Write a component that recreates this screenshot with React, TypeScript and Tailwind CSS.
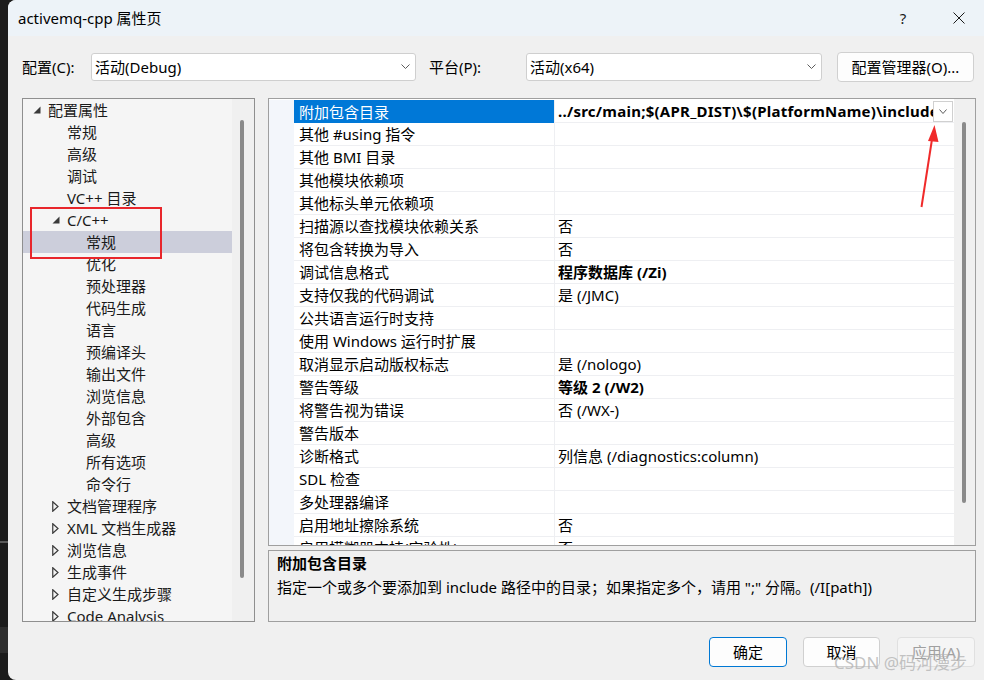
import React from "react";

type TreeItem = { label: string; level: 0 | 1 | 2; kind: "open" | "closed" | "none"; selected?: boolean };

const tree: TreeItem[] = [
  { label: "配置属性", level: 0, kind: "open" },
  { label: "常规", level: 1, kind: "none" },
  { label: "高级", level: 1, kind: "none" },
  { label: "调试", level: 1, kind: "none" },
  { label: "VC++ 目录", level: 1, kind: "none" },
  { label: "C/C++", level: 1, kind: "open" },
  { label: "常规", level: 2, kind: "none", selected: true },
  { label: "优化", level: 2, kind: "none" },
  { label: "预处理器", level: 2, kind: "none" },
  { label: "代码生成", level: 2, kind: "none" },
  { label: "语言", level: 2, kind: "none" },
  { label: "预编译头", level: 2, kind: "none" },
  { label: "输出文件", level: 2, kind: "none" },
  { label: "浏览信息", level: 2, kind: "none" },
  { label: "外部包含", level: 2, kind: "none" },
  { label: "高级", level: 2, kind: "none" },
  { label: "所有选项", level: 2, kind: "none" },
  { label: "命令行", level: 2, kind: "none" },
  { label: "文档管理程序", level: 1, kind: "closed" },
  { label: "XML 文档生成器", level: 1, kind: "closed" },
  { label: "浏览信息", level: 1, kind: "closed" },
  { label: "生成事件", level: 1, kind: "closed" },
  { label: "自定义生成步骤", level: 1, kind: "closed" },
  { label: "Code Analysis", level: 1, kind: "closed" },
];

type Prop = { name: string; value?: string; bold?: boolean };

const props: Prop[] = [
  { name: "附加包含目录", value: "../src/main;$(APR_DIST)\\$(PlatformName)\\include", bold: true },
  { name: "其他 #using 指令" },
  { name: "其他 BMI 目录" },
  { name: "其他模块依赖项" },
  { name: "其他标头单元依赖项" },
  { name: "扫描源以查找模块依赖关系", value: "否" },
  { name: "将包含转换为导入", value: "否" },
  { name: "调试信息格式", value: "程序数据库 (/Zi)", bold: true },
  { name: "支持仅我的代码调试", value: "是 (/JMC)" },
  { name: "公共语言运行时支持" },
  { name: "使用 Windows 运行时扩展" },
  { name: "取消显示启动版权标志", value: "是 (/nologo)" },
  { name: "警告等级", value: "等级 2 (/W2)", bold: true },
  { name: "将警告视为错误", value: "否 (/WX-)" },
  { name: "警告版本" },
  { name: "诊断格式", value: "列信息 (/diagnostics:column)" },
  { name: "SDL 检查" },
  { name: "多处理器编译" },
  { name: "启用地址擦除系统", value: "否" },
  { name: "启用模糊器支持(实验性)", value: "否" },
];

const spacer: Record<number, string> = { 0: "w-[10px]", 1: "w-[29px]", 2: "w-[48px]" };

function Chevron({ w = 9, h = 5 }: { w?: number; h?: number }) {
  return (
    <svg width={w} height={h} viewBox={`0 0 ${w} ${h}`} fill="none">
      <path d={`M0.5 0.5 L${w / 2} ${h - 0.5} L${w - 0.5} 0.5`} stroke="#5c5c5c" strokeWidth="1" />
    </svg>
  );
}

function TreeRow({ item }: { item: TreeItem }) {
  return (
    <div className={`h-[22px] flex items-center shrink-0 ${item.selected ? "bg-[#cccedb]" : ""}`}>
      <div className={`${spacer[item.level]} shrink-0`} />
      <div className="w-[15px] shrink-0 flex items-center">
        {item.kind === "open" && (
          <svg width="8" height="8" viewBox="0 0 8 8">
            <polygon points="7.5,0.5 7.5,7.5 0.5,7.5" fill="#3a3a3a" />
          </svg>
        )}
        {item.kind === "closed" && (
          <svg width="7" height="11" viewBox="0 0 7 11">
            <polygon points="0.75,0.75 6,5.5 0.75,10.25" fill="none" stroke="#3a3a3a" strokeWidth="1.2" />
          </svg>
        )}
      </div>
      <span className="whitespace-nowrap text-[#1a1a1a]">{item.label}</span>
    </div>
  );
}

function PropRow({ p, selected }: { p: Prop; selected?: boolean }) {
  return (
    <div className="flex h-[23px] shrink-0">
      <div className="w-[25px] shrink-0 bg-[#f3f6fb]" />
      <div
        className={`w-[260px] shrink-0 flex items-center pl-[5px] whitespace-nowrap overflow-hidden ${
          selected ? "bg-[#0078d7] text-white" : "border-b border-[#eeeff2] text-black"
        }`}
      >
        {p.name}
      </div>
      <div className="w-[1px] shrink-0 bg-[#eeeff2]" />
      <div className="flex-1 min-w-0 flex items-center border-b border-[#eeeff2]">
        <div
          className={`flex-1 min-w-0 overflow-hidden whitespace-nowrap pl-[3px] ${p.bold ? "font-bold" : ""} ${
            selected ? "tracking-[0.25px]" : ""
          }`}
        >
          {p.value ?? ""}
        </div>
        {selected && (
          <div className="w-[20px] h-[21px] mr-[1px] shrink-0 bg-white border border-[#d0d0d0] flex items-center justify-center">
            <Chevron w={8} h={5} />
          </div>
        )}
      </div>
    </div>
  );
}

export default function App() {
  return (
    <div className="relative w-[984px] h-[680px] flex bg-[#1c1c1c] overflow-hidden text-[15px] leading-[22px] font-[family-name:'Noto_Sans','Noto_Sans_CJK_SC',sans-serif]">
      {/* dark strip of desktop behind */}
      <div className="w-[8px] shrink-0 flex flex-col">
        <div className="h-[541px] bg-[#1c1c1c]" />
        <div className="h-[2px] bg-[#5a5a5a]" />
        <div className="h-[84px] bg-[#1c1c1c]" />
        <div className="h-[26px] bg-[#2e2e2e]" />
        <div className="flex-1 bg-[#1c1c1c]" />
      </div>

      {/* dialog window */}
      <div className="flex-1 flex flex-col bg-[#f0f0f0] rounded-tl-[8px] rounded-bl-[8px] overflow-hidden">
        {/* title bar */}
        <div className="h-[36px] shrink-0 bg-[#edf3f8] flex items-center pl-[10px]">
          <span className="text-black">activemq-cpp 属性页</span>
          <div className="ml-auto flex items-center mr-[2px]">
            <div className="w-[46px] h-[36px] flex items-center justify-center text-[#1a1a1a] text-[15px]">?</div>
            <div className="w-[10px]" />
            <div className="w-[46px] h-[36px] flex items-center justify-center">
              <svg width="12" height="12" viewBox="0 0 12 12">
                <path d="M0.5 0.5 L11.5 11.5 M11.5 0.5 L0.5 11.5" stroke="#1a1a1a" strokeWidth="1" />
              </svg>
            </div>
          </div>
        </div>

        {/* config row */}
        <div className="pt-[16px] pl-[14px] flex items-center h-[45px] shrink-0">
          <div className="w-[69px] shrink-0 h-[29px] flex items-center">配置(C):</div>
          <div className="w-[325px] h-[28px] shrink-0 bg-white border border-[#cfcfcf] rounded-[3px] flex items-center pl-[3px] pr-[5px]">
            <span className="flex-1">活动(Debug)</span>
            <Chevron />
          </div>
          <div className="w-[13px] shrink-0" />
          <div className="w-[97px] shrink-0 flex items-center">平台(P):</div>
          <div className="w-[296px] h-[28px] shrink-0 bg-white border border-[#cfcfcf] rounded-[3px] flex items-center pl-[3px] pr-[5px]">
            <span className="flex-1">活动(x64)</span>
            <Chevron />
          </div>
          <div className="w-[15px] shrink-0" />
          <div className="w-[137px] h-[30px] shrink-0 bg-[#fdfdfd] border border-[#d0d0d0] rounded-[4px] flex items-center justify-center">
            配置管理器(O)...
          </div>
        </div>

        {/* main area */}
        <div className="mt-[17px] pl-[14px] flex shrink-0">
          {/* tree */}
          <div className="w-[233px] h-[524px] shrink-0 border border-[#8f8f8f] flex overflow-hidden">
            <div className="flex-1 bg-[#f5f5f5] flex flex-col overflow-hidden">
              {tree.map((t, i) => (
                <TreeRow key={i} item={t} />
              ))}
            </div>
            <div className="w-[22px] shrink-0 bg-[#f0f0f0] pt-[21px] pl-[8px]">
              <div className="w-[4px] h-[458px] bg-[#8a8a8a] rounded-[2px]" />
            </div>
          </div>

          <div className="w-[13px] shrink-0" />

          {/* right column */}
          <div className="w-[708px] shrink-0 flex flex-col gap-[4px]">
            <div className="h-[448px] border border-[#9f9f9f] flex overflow-hidden bg-white">
              <div className="flex-1 min-w-0 flex flex-col pt-[1px] overflow-hidden">
                {props.map((p, i) => (
                  <PropRow key={i} p={p} selected={i === 0} />
                ))}
              </div>
              <div className="w-[21px] shrink-0 bg-[#f0f0f0] pt-[23px] pl-[8px]">
                <div className="w-[4px] h-[381px] bg-[#8a8a8a] rounded-[2px]" />
              </div>
            </div>
            <div className="h-[72px] border border-[#9f9f9f] bg-[#f0f0f0] pl-[8px] pt-[1px] flex flex-col gap-[2px]">
              <div className="font-bold text-black">附加包含目录</div>
              <div className="text-black whitespace-nowrap">
                指定一个或多个要添加到 include 路径中的目录；如果指定多个，请用 ";" 分隔。(/I[path])
              </div>
            </div>
          </div>
        </div>

        {/* bottom buttons */}
        <div className="mt-[15px] flex justify-end pr-[9px] shrink-0">
          <div className="w-[78px] h-[30px] bg-[#fdfdfd] border border-[#0078d4] rounded-[4px] flex items-center justify-center">
            确定
          </div>
          <div className="w-[16px]" />
          <div className="w-[77px] h-[30px] bg-[#fdfdfd] border border-[#d0d0d0] rounded-[4px] flex items-center justify-center">
            取消
          </div>
          <div className="w-[17px]" />
          <div className="w-[78px] h-[30px] bg-[#f5f5f5] border border-[#e0e0e0] rounded-[4px] flex items-center justify-center text-[#a0a0a0]">
            应用(A)
          </div>
        </div>
      </div>

      {/* red highlight box over tree */}
      <div className="absolute left-[30px] top-[207px] w-[132px] h-[52px] border-2 border-[#e8262b]" />

      {/* red arrow */}
      <svg className="absolute left-0 top-0" width="984" height="680" viewBox="0 0 984 680" fill="none">
        <line x1="921.5" y1="207" x2="932.5" y2="136" stroke="#f02a2a" strokeWidth="2" />
        <polygon points="934.5,125 928,141 938.5,142" fill="#f02a2a" />
      </svg>

      {/* watermark */}
      <div className="absolute left-[834px] top-[651px] text-[17px] leading-[24px] text-[#b4b4b4]/80 whitespace-nowrap">
        CSDN @码河漫步
      </div>
    </div>
  );
}
